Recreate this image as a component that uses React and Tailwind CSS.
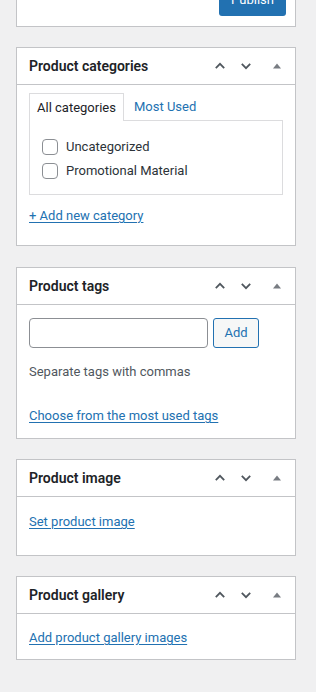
import React from 'react';

function Chevron({ up }) {
  return (
    <svg width="14" height="14" viewBox="0 0 20 20" className="text-[#50575e]">
      <path
        d={up ? 'M4 13 L10 7 L16 13' : 'M4 7 L10 13 L16 7'}
        fill="none"
        stroke="currentColor"
        strokeWidth="2.6"
        strokeLinecap="butt"
      />
    </svg>
  );
}

function Header({ title }) {
  return (
    <div className="flex h-[37px] items-center border-b border-[#c3c4c7]">
      <h2 className="flex-1 pl-3 text-[14px] font-semibold leading-5 text-[#1d2327]">{title}</h2>
      <div className="flex h-full items-center">
        <span className="flex h-full w-[26px] items-center justify-center">
          <Chevron up />
        </span>
        <span className="flex h-full w-[26px] items-center justify-center">
          <Chevron />
        </span>
        <span className="flex h-full w-[36px] items-center justify-center">
          <svg width="10" height="8" viewBox="0 0 10 8" className="text-[#787c82]">
            <path d="M1 6.5 L5 1.5 L9 6.5 Z" fill="currentColor" />
          </svg>
        </span>
      </div>
    </div>
  );
}

function Box({ title, className = 'mb-5', children }) {
  return (
    <div className={`${className} w-[280px] border border-[#c3c4c7] bg-white`}>
      <Header title={title} />
      {children}
    </div>
  );
}

function Check({ label }) {
  return (
    <label className="flex h-[24px] items-center gap-2">
      <span className="block h-4 w-4 rounded-[4px] border border-[#8c8f94] bg-white" />
      <span className="text-[13px] leading-5 text-[#2c3338]">{label}</span>
    </label>
  );
}

function Link({ children }) {
  return (
    <div className="text-[13px] leading-5">
      <a className="text-[#2271b1] underline underline-offset-2">{children}</a>
    </div>
  );
}

export default function App() {
  return (
    <div
      className="min-h-[692px] bg-[#f0f0f1] pl-4"
      style={{ fontFamily: 'Roboto, "Noto Sans", sans-serif' }}
    >
      {/* Publish box (cut off at the top) */}
      <div className="mb-5 flex h-[27px] w-[280px] items-end justify-end overflow-hidden border border-t-0 border-[#c3c4c7] bg-white pb-[10px] pr-[9px]">
        <button className="flex h-[32px] w-[67px] shrink-0 items-center justify-center rounded-[3px] bg-[#2271b1] text-[13px] leading-5 text-white">
          Publish
        </button>
      </div>

      <Box title="Product categories" className="mb-[21px]">
        <div className="px-3 pb-[19px] pt-2">
          <div className="flex items-end">
            <div className="relative -mb-px flex h-[28px] items-center border border-b-0 border-[#dcdcde] bg-white px-[7px] text-[13px] leading-5 text-[#1d2327]">
              All categories
            </div>
            <div className="flex h-[27px] items-center pl-[10px] text-[13px] leading-5 text-[#2271b1]">Most Used</div>
          </div>
          <div className="mb-[11px] border border-[#dcdcde] bg-white pb-[11px] pl-3 pt-[14px]">
            <Check label="Uncategorized" />
            <Check label="Promotional Material" />
          </div>
          <Link>+ Add new category</Link>
        </div>
      </Box>

      <Box title="Product tags">
        <div className="px-3 pb-3 pt-[13px]">
          <div className="flex gap-[5px]">
            <input className="h-[30px] w-[179px] rounded-[4px] border border-[#8c8f94] bg-white" />
            <button className="h-[30px] w-[46px] rounded-[3px] border border-[#2271b1] bg-[#f6f7f7] text-[13px] leading-5 text-[#2271b1]">
              Add
            </button>
          </div>
          <p className="mb-[24px] mt-[14px] text-[13px] leading-5 text-[#50575e]">Separate tags with commas</p>
          <Link>Choose from the most used tags</Link>
        </div>
      </Box>

      <Box title="Product image">
        <div className="px-3 pb-[23px] pt-[15px]">
          <Link>Set product image</Link>
        </div>
      </Box>

      <Box title="Product gallery">
        <div className="px-3 pb-[11px] pt-[14px]">
          <Link>Add product gallery images</Link>
        </div>
      </Box>
    </div>
  );
}
